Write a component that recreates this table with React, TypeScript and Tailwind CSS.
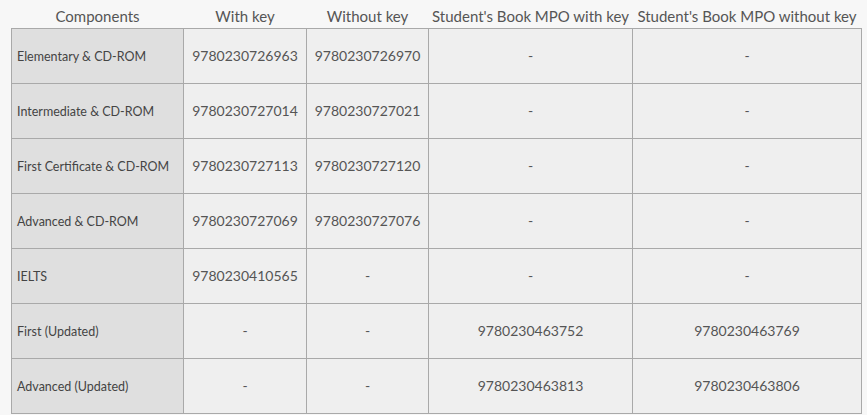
const rows: [string, string, string, string, string][] = [
  ['Elementary & CD-ROM', '9780230726963', '9780230726970', '-', '-'],
  ['Intermediate & CD-ROM', '9780230727014', '9780230727021', '-', '-'],
  ['First Certificate & CD-ROM', '9780230727113', '9780230727120', '-', '-'],
  ['Advanced & CD-ROM', '9780230727069', '9780230727076', '-', '-'],
  ['IELTS', '9780230410565', '-', '-', '-'],
  ['First (Updated)', '-', '-', '9780230463752', '9780230463769'],
  ['Advanced (Updated)', '-', '-', '9780230463813', '9780230463806'],
]

const headers = ['Components', 'With key', 'Without key', "Student's Book MPO with key", "Student's Book MPO without key"]

export default function App() {
  return (
    <div className="min-h-[415px] w-[867px] bg-[#f7f7f7] pl-[11px] font-['Lato','Open_Sans',sans-serif] text-[#555]">
      <table className="w-[850px] table-fixed border-collapse">
        <colgroup>
          <col className="w-[172px]" />
          <col className="w-[123px]" />
          <col className="w-[122px]" />
          <col className="w-[204px]" />
          <col className="w-[229px]" />
        </colgroup>
        <thead>
          <tr className="h-[28px]">
            {headers.map((h) => (
              <th key={h} className="h-[28px] whitespace-nowrap p-0 pt-[4px] text-center text-[15px] leading-[18px] font-normal text-[#555]">
                {h}
              </th>
            ))}
          </tr>
        </thead>
        <tbody>
          {rows.map((row) => (
            <tr key={row[0]} className="h-[55px]">
              <td className="whitespace-nowrap border border-[#a9a9a9] bg-[#dfdfdf] px-[5px] pt-[2px] text-[12.5px] leading-[18px] text-[#444]">{row[0]}</td>
              {row.slice(1).map((v, i) => (
                <td key={i} className="border border-[#a9a9a9] bg-[#efefef] p-0 text-center text-[14px] leading-[18px] text-[#555]">
                  {v}
                </td>
              ))}
            </tr>
          ))}
        </tbody>
      </table>
    </div>
  )
}
